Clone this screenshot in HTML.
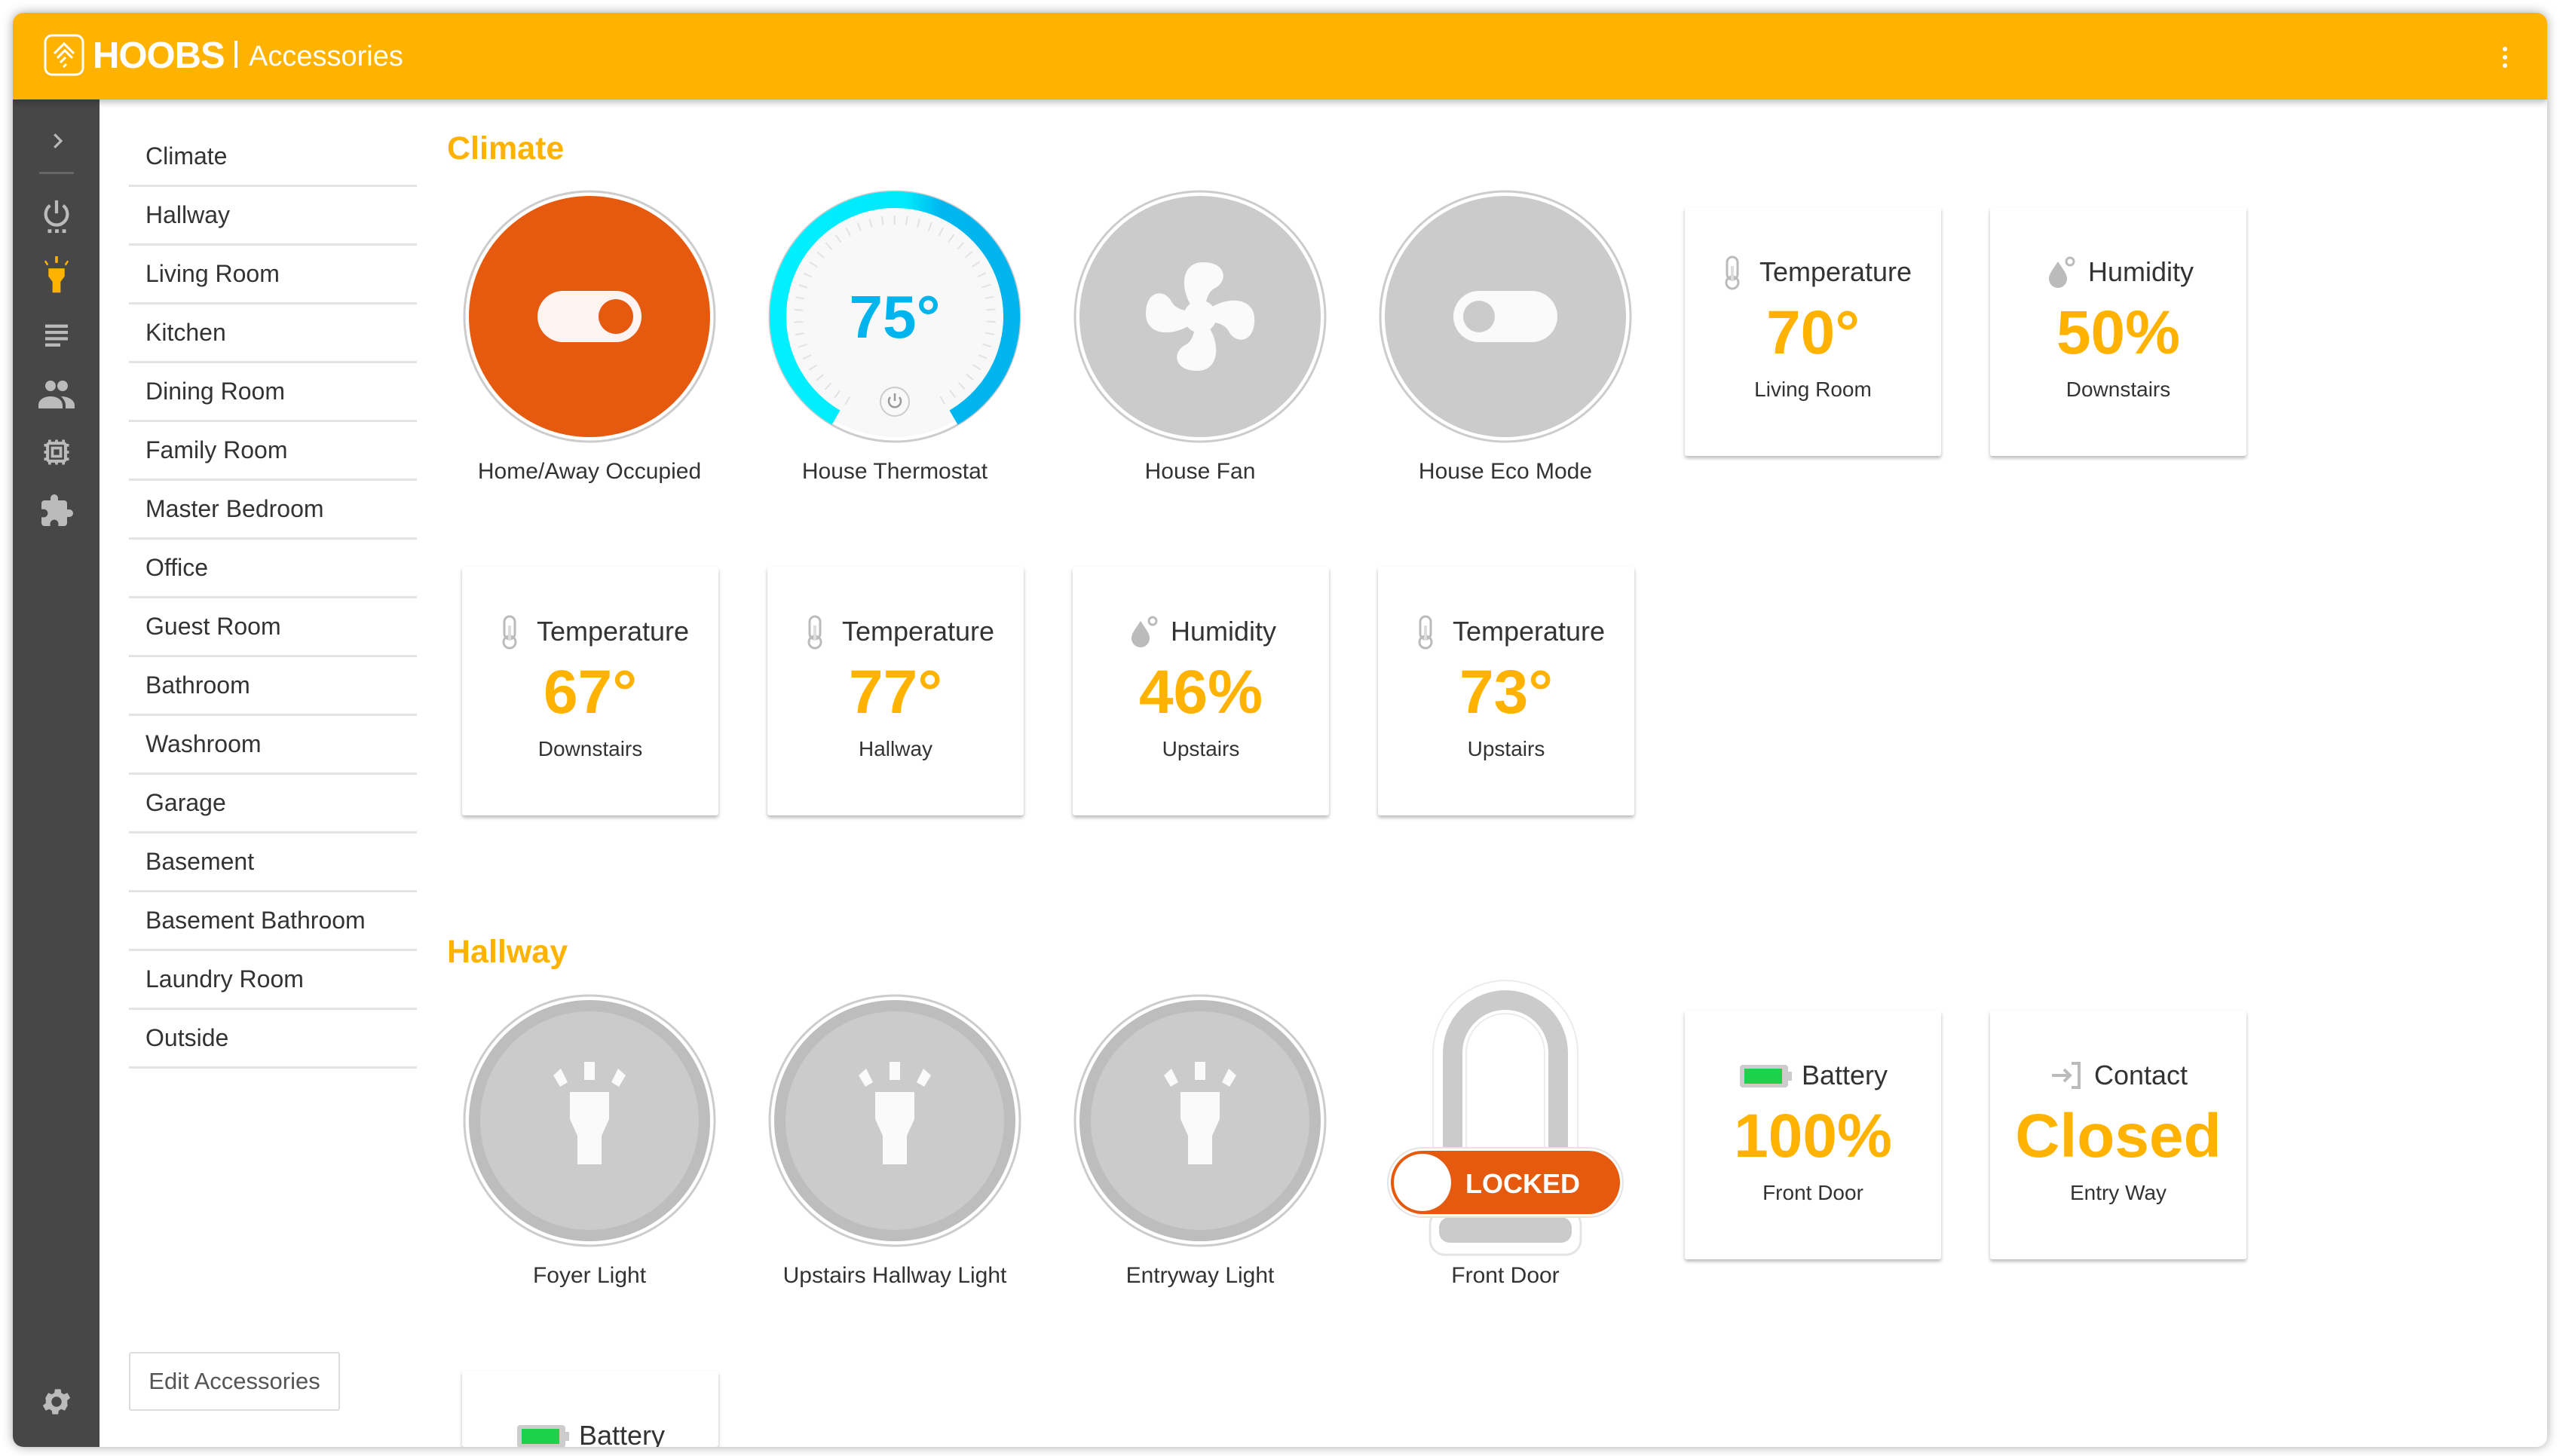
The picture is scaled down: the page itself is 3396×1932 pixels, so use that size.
<!DOCTYPE html>
<html><head><meta charset="utf-8"><style>
*{box-sizing:border-box;margin:0;padding:0}
html,body{width:3396px;height:1932px;overflow:hidden}
body{background:#fff;font-family:"Liberation Sans",sans-serif;position:relative}
.win{position:absolute;left:17px;top:17px;width:3362px;height:1903px;border-radius:14px;overflow:hidden;box-shadow:0 0 14px rgba(0,0,0,.35);background:#fff}
.hdr{position:absolute;left:0;top:0;width:100%;height:115px;background:#ffb300;box-shadow:0 4px 8px rgba(0,0,0,.25);z-index:2}
.side{position:absolute;left:0;top:115px;width:115px;bottom:0;background:#474747}
.a{position:absolute}
.mi{position:absolute;left:154px;width:382px;height:78px;border-bottom:3px solid #e3e3e3;font-size:32px;color:#333;padding-left:22px;line-height:74px}
.h{position:absolute;font-size:43px;font-weight:bold;color:#ffb300}
.lbl{position:absolute;width:420px;text-align:center;font-size:30px;color:#333}
.card{position:absolute;width:340px;height:330px;background:#fff;box-shadow:0 3px 5px rgba(0,0,0,.28);text-align:center;border-radius:3px}
.ct{position:absolute;top:62px;left:0;width:100%;font-size:36px;color:#333;display:flex;justify-content:center;align-items:center;gap:12px}
.cv{position:absolute;top:120px;left:0;width:100%;font-size:82px;font-weight:bold;color:#ffb300}
.cs{position:absolute;top:226px;left:0;width:100%;font-size:28px;color:#333}
</style></head><body>
<div class="win">
<div class="hdr">
 <svg class="a" style="left:41px;top:28px" width="54" height="56" viewBox="0 0 54 56"><rect x="2" y="2" width="50" height="52" rx="9" fill="none" stroke="#fff" stroke-width="3"/><path d="M14 26 L27 13 L40 26 M18 32 L28 22 L38 32 M22 38 L29 31 M26 44 L30 40" fill="none" stroke="#fff" stroke-width="3"/></svg>
 <div class="a" style="left:106px;top:29px;font-size:49px;font-weight:bold;color:#fff;letter-spacing:-1px">HOOBS</div>
 <div class="a" style="left:294px;top:37px;width:4px;height:36px;background:#fff"></div>
 <div class="a" style="left:313px;top:37px;font-size:38px;color:#fff">Accessories</div>
 <div class="a" style="left:3303px;top:45px;width:6px;height:6px;border-radius:3px;background:#fff;box-shadow:0 11px 0 #fff,0 22px 0 #fff"></div>
</div>
<div class="side">
 <svg class="a" style="left:44px;top:40px" width="30" height="30" viewBox="0 0 24 24"><path d="M9 5l7 7-7 7" fill="none" stroke="#bbb" stroke-width="2.5"/></svg>
 <div class="a" style="left:35px;top:96px;width:46px;height:3px;background:#666"></div>
 <svg class="a" style="left:35px;top:130px" width="46" height="50" viewBox="0 0 24 26"><path d="M12 2v9M7.5 5.5A7.5 7.5 0 1 0 16.5 5.5" fill="none" stroke="#bbb" stroke-width="2.2"/><rect x="6" y="22" width="2.5" height="2.5" fill="#bbb"/><rect x="11" y="22" width="2.5" height="2.5" fill="#bbb"/><rect x="16" y="22" width="2.5" height="2.5" fill="#bbb"/></svg>
 <svg class="a" style="left:36px;top:208px" width="44" height="50" viewBox="0 0 24 28"><path d="M11 0h2v5h-2zM4 3l2 3-1 1-2-3zM20 3l-2 3 1 1 2-3zM6 9h12v6l-3 4v8h-6v-8l-3-4z" fill="#ffb300"/></svg>
 <svg class="a" style="left:38px;top:292px" width="40" height="40" viewBox="0 0 24 24"><path d="M3 4h18v2.5H3zM3 9h18v2.5H3zM3 14h18v2.5H3zM3 19h12v2.5H3z" fill="#bbb"/></svg>
 <svg class="a" style="left:34px;top:368px" width="48" height="44" viewBox="0 0 24 22"><circle cx="8" cy="6" r="3.5" fill="#bbb"/><circle cx="16" cy="6" r="3.5" fill="#bbb"/><path d="M0 19c0-4 4-6 8-6s8 2 8 6v2H0zM15 13c4 0 9 2 9 6v2h-6v-2c0-2-1-4-3-6z" fill="#bbb"/></svg>
 <svg class="a" style="left:36px;top:446px" width="44" height="44" viewBox="0 0 24 24"><path d="M7 3v3M12 3v3M17 3v3M7 18v3M12 18v3M17 18v3M3 7h3M3 12h3M3 17h3M18 7h3M18 12h3M18 17h3" stroke="#bbb" stroke-width="2"/><rect x="5.5" y="5.5" width="13" height="13" rx="1.5" fill="none" stroke="#bbb" stroke-width="2.2"/><rect x="9" y="9" width="6" height="6" fill="none" stroke="#bbb" stroke-width="2"/></svg>
 <svg class="a" style="left:34px;top:522px" width="48" height="48" viewBox="0 0 24 24"><path d="M20.5 11H19V7a2 2 0 0 0-2-2h-4V3.5a2.5 2.5 0 0 0-5 0V5H4a2 2 0 0 0-2 2v3.8h1.5a2.7 2.7 0 0 1 0 5.4H2V20a2 2 0 0 0 2 2h3.8v-1.5a2.7 2.7 0 0 1 5.4 0V22H17a2 2 0 0 0 2-2v-4h1.5a2.5 2.5 0 0 0 0-5z" fill="#bbb"/></svg>
 <svg class="a" style="left:35px;top:1705px" width="46" height="46" viewBox="0 0 24 24"><path d="M19.4 13a7.5 7.5 0 0 0 0-2l2.1-1.6-2-3.5-2.5 1a7 7 0 0 0-1.7-1l-.4-2.6h-4l-.4 2.6a7 7 0 0 0-1.7 1l-2.5-1-2 3.5L4.6 11a7.5 7.5 0 0 0 0 2l-2.1 1.6 2 3.5 2.5-1a7 7 0 0 0 1.7 1l.4 2.6h4l.4-2.6a7 7 0 0 0 1.7-1l2.5 1 2-3.5zM12 15.5a3.5 3.5 0 1 1 0-7 3.5 3.5 0 0 1 0 7z" fill="#bbb"/></svg>
</div>

<div class="mi" style="top:153px">Climate</div>
<div class="mi" style="top:231px">Hallway</div>
<div class="mi" style="top:309px">Living Room</div>
<div class="mi" style="top:387px">Kitchen</div>
<div class="mi" style="top:465px">Dining Room</div>
<div class="mi" style="top:543px">Family Room</div>
<div class="mi" style="top:621px">Master Bedroom</div>
<div class="mi" style="top:699px">Office</div>
<div class="mi" style="top:777px">Guest Room</div>
<div class="mi" style="top:855px">Bathroom</div>
<div class="mi" style="top:933px">Washroom</div>
<div class="mi" style="top:1011px">Garage</div>
<div class="mi" style="top:1089px">Basement</div>
<div class="mi" style="top:1167px">Basement Bathroom</div>
<div class="mi" style="top:1245px">Laundry Room</div>
<div class="mi" style="top:1323px">Outside</div>
<div class="a" style="left:154px;top:1777px;width:280px;height:78px;border:2px solid #ddd;border-radius:3px;font-size:31px;color:#555;text-align:center;line-height:74px">Edit Accessories</div>

<div class="h" style="left:576px;top:156px">Climate</div>
<div class="h" style="left:576px;top:1222px">Hallway</div>

<svg class="a" style="left:595px;top:233px" width="340" height="340" viewBox="0 0 340 340"><circle cx="170" cy="170" r="166" fill="#fff" stroke="#ccc" stroke-width="3"/><circle cx="170" cy="170" r="160" fill="#e65a0f"/><rect x="101" y="136" width="138" height="68" rx="34" fill="#fdf3f0"/><circle cx="205" cy="170" r="23" fill="#e65a0f"/></svg>
<svg class="a" style="left:1000px;top:233px" width="340" height="340" viewBox="0 0 340 340"><defs><linearGradient id="tg" x1="0" x2="1"><stop offset="0" stop-color="#00f0ff"/><stop offset="0.55" stop-color="#00e8fb"/><stop offset="0.7" stop-color="#00b6ef"/><stop offset="1" stop-color="#00b4ee"/></linearGradient></defs><circle cx="170" cy="170" r="166" fill="#fff" stroke="#ccc" stroke-width="3"/><circle cx="170" cy="170" r="160" fill="#f8f8f8"/><path d="M92 304 A155 155 0 1 1 248 304" fill="none" stroke="url(#tg)" stroke-width="22"/><path d="M108 282 A128 128 0 1 1 232 282" fill="none" stroke="#e2e2e2" stroke-width="12" stroke-dasharray="2 14"/><circle cx="170" cy="170" r="118" fill="#f8f8f8"/><text x="170" y="198" text-anchor="middle" font-family="Liberation Sans" font-weight="bold" font-size="80" fill="#00b4ee">75°</text><circle cx="170" cy="283" r="19" fill="#f8f8f8" stroke="#ccc" stroke-width="2"/><path d="M170 272v10M164 277a8 8 0 1 0 12 0" fill="none" stroke="#999" stroke-width="2.5"/></svg>
<svg class="a" style="left:1405px;top:233px" width="340" height="340" viewBox="0 0 340 340"><circle cx="170" cy="170" r="166" fill="#fff" stroke="#ccc" stroke-width="3"/><circle cx="170" cy="170" r="160" fill="#cbcbcb"/><g transform="translate(170 170) scale(7.2) translate(-12 -12)"><path fill="#fafafa" d="M12.5,2C17,2 17.11,5.57 14.75,6.75C13.76,7.24 13.32,8.29 13.13,9.22C13.61,9.42 14.03,9.73 14.35,10.13C18.05,8.13 22.03,8.92 22.03,12.5C22.03,17 18.46,17.1 17.28,14.73C16.78,13.74 15.72,13.3 14.79,13.11C14.59,13.59 14.28,14 13.88,14.34C15.87,18.03 15.08,22 11.5,22C7,22 6.91,18.42 9.27,17.24C10.25,16.75 10.69,15.71 10.89,14.79C10.4,14.59 9.97,14.27 9.65,13.870C5.960,15.85 2,15.07 2,11.5C2,7 5.56,6.89 6.74,9.26C7.24,10.25 8.29,10.68 9.22,10.87C9.41,10.39 9.73,9.97 10.14,9.65C8.15,5.96 8.94,2 12.5,2Z"/></g></svg>
<svg class="a" style="left:1810px;top:233px" width="340" height="340" viewBox="0 0 340 340"><circle cx="170" cy="170" r="166" fill="#fff" stroke="#ccc" stroke-width="3"/><circle cx="170" cy="170" r="160" fill="#cbcbcb"/><rect x="101" y="136" width="138" height="68" rx="34" fill="#fafafa"/><circle cx="135" cy="170" r="21" fill="#cbcbcb"/></svg>
<div class="lbl" style="left:555px;top:592px">Home/Away Occupied</div>
<div class="lbl" style="left:960px;top:592px">House Thermostat</div>
<div class="lbl" style="left:1365px;top:592px">House Fan</div>
<div class="lbl" style="left:1770px;top:592px">House Eco Mode</div>

<svg width="0" height="0" style="position:absolute"><defs>
<g id="th"><rect x="17" y="4" width="14" height="30" rx="7" fill="none" stroke="#bbb" stroke-width="3"/><circle cx="24" cy="38" r="8" fill="none" stroke="#bbb" stroke-width="3"/><rect x="22" y="16" width="4" height="20" fill="#ddd"/></g>
<g id="hu"><path d="M20 10 C28 22 32 27 32 33 a12 12 0 0 1 -24 0 c0-6 4-11 12-23z" fill="#bbb"/><circle cx="36" cy="10" r="5" fill="none" stroke="#bbb" stroke-width="3"/></g>
<g id="ba"><rect x="2" y="10" width="64" height="30" rx="4" fill="#ccc"/><rect x="8" y="15" width="50" height="20" fill="#1ed14b"/><rect x="66" y="19" width="5" height="12" fill="#ccc"/></g>
<g id="lt"><circle cx="170" cy="170" r="166" fill="#fff" stroke="#ccc" stroke-width="3"/><circle cx="170" cy="170" r="160" fill="#bdbdbd"/><circle cx="170" cy="170" r="145" fill="#cbcbcb"/><path d="M163 92h14v24h-14zM122 110l10-9 9 18-10 6zM218 110l-10-9-9 18 10 6zM144 132h52v36l-10 22v38h-32v-38l-10-22z" fill="#fafafa"/></g>
</defs></svg>

<div class="card" style="left:2218px;top:258px"><div class="ct"><svg width="48" height="48"><use href="#th"/></svg>Temperature</div><div class="cv">70°</div><div class="cs">Living Room</div></div>
<div class="card" style="left:2623px;top:258px"><div class="ct"><svg width="48" height="48"><use href="#hu"/></svg>Humidity</div><div class="cv">50%</div><div class="cs">Downstairs</div></div>

<div class="card" style="left:596px;top:735px"><div class="ct"><svg width="48" height="48"><use href="#th"/></svg>Temperature</div><div class="cv">67°</div><div class="cs">Downstairs</div></div>
<div class="card" style="left:1001px;top:735px"><div class="ct"><svg width="48" height="48"><use href="#th"/></svg>Temperature</div><div class="cv">77°</div><div class="cs">Hallway</div></div>
<div class="card" style="left:1406px;top:735px"><div class="ct"><svg width="48" height="48"><use href="#hu"/></svg>Humidity</div><div class="cv">46%</div><div class="cs">Upstairs</div></div>
<div class="card" style="left:1811px;top:735px"><div class="ct"><svg width="48" height="48"><use href="#th"/></svg>Temperature</div><div class="cv">73°</div><div class="cs">Upstairs</div></div>

<svg class="a" style="left:595px;top:1300px" width="340" height="340"><use href="#lt"/></svg>
<svg class="a" style="left:1000px;top:1300px" width="340" height="340"><use href="#lt"/></svg>
<svg class="a" style="left:1405px;top:1300px" width="340" height="340"><use href="#lt"/></svg>
<svg class="a" style="left:1810px;top:1280px" width="340" height="380" viewBox="0 0 340 380"><path d="M96 250 V100 a74 74 0 0 1 148 0 V250" fill="none" stroke="#ececec" stroke-width="46"/><path d="M96 250 V100 a74 74 0 0 1 148 0 V250" fill="none" stroke="#fff" stroke-width="42"/><path d="M100 245 V100 a70 70 0 0 1 140 0 V245" fill="none" stroke="#cbcbcb" stroke-width="26"/><rect x="70" y="308" width="200" height="60" rx="20" fill="#fff" stroke="#e4e4e4" stroke-width="3"/><rect x="82" y="318" width="176" height="34" rx="14" fill="#cbcbcb"/><rect x="14" y="226" width="312" height="92" rx="46" fill="#fff" stroke="#e4e4e4" stroke-width="2"/><rect x="18" y="230" width="304" height="84" rx="42" fill="#e65a0f"/><circle cx="60" cy="272" r="38" fill="#fff"/><text x="193" y="286" text-anchor="middle" font-family="Liberation Sans" font-weight="bold" font-size="36" fill="#fff">LOCKED</text></svg>
<div class="lbl" style="left:555px;top:1659px">Foyer Light</div>
<div class="lbl" style="left:960px;top:1659px">Upstairs Hallway Light</div>
<div class="lbl" style="left:1365px;top:1659px">Entryway Light</div>
<div class="lbl" style="left:1770px;top:1659px">Front Door</div>

<div class="card" style="left:2218px;top:1324px"><div class="ct"><svg width="72" height="48"><use href="#ba"/></svg>Battery</div><div class="cv">100%</div><div class="cs">Front Door</div></div>
<div class="card" style="left:2623px;top:1324px"><div class="ct"><svg width="48" height="48" viewBox="0 0 24 24"><path d="M2 12h12M10 8l4 4-4 4M15 4h5v16h-5" fill="none" stroke="#bbb" stroke-width="2"/></svg>Contact</div><div class="cv">Closed</div><div class="cs">Entry Way</div></div>
<div class="card" style="left:596px;top:1802px;height:101px"><div class="ct"><svg width="72" height="48"><use href="#ba"/></svg>Battery</div></div>
</div>
</body></html>
